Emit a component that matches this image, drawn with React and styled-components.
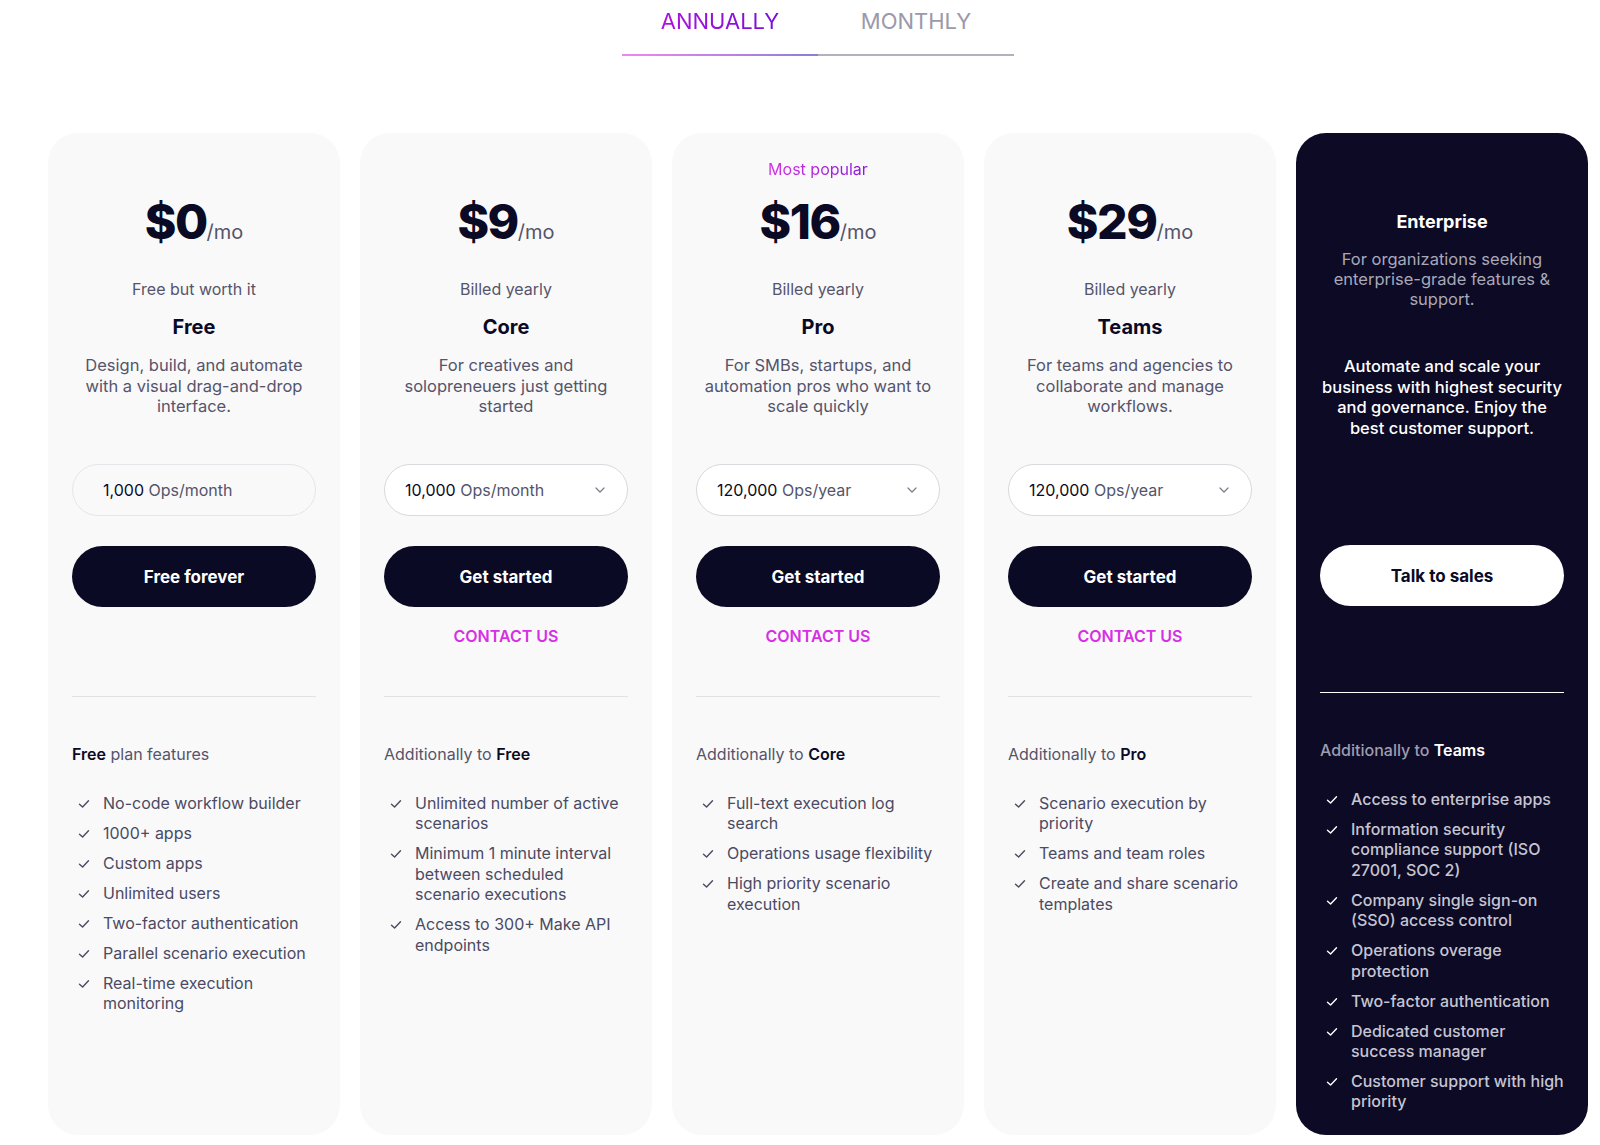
import React, { useState } from 'react'
import styled, { createGlobalStyle, css } from 'styled-components'

const GlobalStyle = createGlobalStyle`
  * { box-sizing: border-box; }
  body {
    margin: 0;
    background: #ffffff;
    font-family: 'Inter', 'Noto Sans', 'Liberation Sans', sans-serif;
    color: #0b0a24;
    -webkit-font-smoothing: antialiased;
  }
`

const plans = [
  {
    price: '$0',
    note: 'Free but worth it',
    name: 'Free',
    desc: 'Design, build, and automate with a visual drag-and-drop interface.',
    ops: '1,000',
    unit: 'Ops/month',
    select: false,
    cta: 'Free forever',
    contact: false,
    headingPre: '',
    headingBold: 'Free',
    headingPost: ' plan features',
    features: [
      'No-code workflow builder',
      '1000+ apps',
      'Custom apps',
      'Unlimited users',
      'Two-factor authentication',
      'Parallel scenario execution',
      'Real-time execution monitoring',
    ],
  },
  {
    price: '$9',
    note: 'Billed yearly',
    name: 'Core',
    desc: 'For creatives and solopreneuers just getting started',
    ops: '10,000',
    unit: 'Ops/month',
    select: true,
    cta: 'Get started',
    contact: true,
    headingPre: 'Additionally to ',
    headingBold: 'Free',
    features: [
      'Unlimited number of active scenarios',
      'Minimum 1 minute interval between scheduled scenario executions',
      'Access to 300+ Make API endpoints',
    ],
  },
  {
    popular: true,
    price: '$16',
    note: 'Billed yearly',
    name: 'Pro',
    desc: 'For SMBs, startups, and automation pros who want to scale quickly',
    ops: '120,000',
    unit: 'Ops/year',
    select: true,
    cta: 'Get started',
    contact: true,
    headingPre: 'Additionally to ',
    headingBold: 'Core',
    features: [
      'Full-text execution log search',
      'Operations usage flexibility',
      'High priority scenario execution',
    ],
  },
  {
    price: '$29',
    note: 'Billed yearly',
    name: 'Teams',
    desc: 'For teams and agencies to collaborate and manage workflows.',
    ops: '120,000',
    unit: 'Ops/year',
    select: true,
    cta: 'Get started',
    contact: true,
    headingPre: 'Additionally to ',
    headingBold: 'Pro',
    features: [
      'Scenario execution by priority',
      'Teams and team roles',
      'Create and share scenario templates',
    ],
  },
]

const enterpriseFeatures = [
  'Access to enterprise apps',
  'Information security compliance support (ISO 27001, SOC 2)',
  'Company single sign-on (SSO) access control',
  'Operations overage protection',
  'Two-factor authentication',
  'Dedicated customer success manager',
  'Customer support with high priority',
]

const CheckIcon = ({ color }) => (
  <svg width="12" height="10" viewBox="0 0 12 10" fill="none">
    <path d="M1.5 5.2 L4.6 8 L10.5 1.8" stroke={color} strokeWidth="1.4" strokeLinecap="round" strokeLinejoin="round" />
  </svg>
)

const Chevron = () => (
  <svg width="10" height="6" viewBox="0 0 10 6" fill="none">
    <path d="M1 1 L5 5 L9 1" stroke="#7c7b8c" strokeWidth="1.2" strokeLinecap="round" strokeLinejoin="round" />
  </svg>
)

function PlanCard({ plan }) {
  return (
    <Card>
      <Header>
        <Popular $show={plan.popular}>Most popular</Popular>
        <Price>
          {plan.price}
          <span>/mo</span>
        </Price>
        <Note>{plan.note}</Note>
        <PlanName>{plan.name}</PlanName>
        <Desc>{plan.desc}</Desc>
      </Header>
      <OpsPill $select={plan.select}>
        <span>
          <b>{plan.ops}</b> {plan.unit}
        </span>
        {plan.select && <Chevron />}
      </OpsPill>
      <CtaButton>{plan.cta}</CtaButton>
      <ContactArea>{plan.contact && <Contact>CONTACT US</Contact>}</ContactArea>
      <Divider />
      <FeatureHeading>
        {plan.headingPre}
        <b>{plan.headingBold}</b>
        {plan.headingPost}
      </FeatureHeading>
      <FeatureList>
        {plan.features.map((f) => (
          <Feature key={f}>
            <CheckIcon color="#4b4a63" />
            <span>{f}</span>
          </Feature>
        ))}
      </FeatureList>
    </Card>
  )
}

function EnterpriseCard() {
  return (
    <Card $dark>
      <EnterpriseHeader>
        <EnterpriseName>Enterprise</EnterpriseName>
        <EnterpriseDesc>For organizations seeking enterprise-grade features &amp; support.</EnterpriseDesc>
        <Tagline>
          Automate and scale your business with highest security and governance. Enjoy the best customer support.
        </Tagline>
      </EnterpriseHeader>
      <CtaButton $light>Talk to sales</CtaButton>
      <ContactArea $short />
      <Divider $dark />
      <FeatureHeading $dark>
        Additionally to <b>Teams</b>
      </FeatureHeading>
      <FeatureList>
        {enterpriseFeatures.map((f) => (
          <Feature key={f} $dark>
            <CheckIcon color="#ffffff" />
            <span>{f}</span>
          </Feature>
        ))}
      </FeatureList>
    </Card>
  )
}

export default function App() {
  const [period, setPeriod] = useState('annually')
  return (
    <>
      <GlobalStyle />
      <Page>
        <Tabs>
          <Tab onClick={() => setPeriod('annually')}>
            <TabLabel $active={period === 'annually'}>ANNUALLY</TabLabel>
            <TabBar $active={period === 'annually'} />
          </Tab>
          <Tab onClick={() => setPeriod('monthly')}>
            <TabLabel $active={period === 'monthly'}>MONTHLY</TabLabel>
            <TabBar $active={period === 'monthly'} />
          </Tab>
        </Tabs>
        <Grid>
          {plans.map((p) => (
            <PlanCard key={p.name} plan={p} />
          ))}
          <EnterpriseCard />
        </Grid>
      </Page>
    </>
  )
}

const Page = styled.div`
  width: 1540px;
  margin-left: 48px;
  display: flex;
  flex-direction: column;
  align-items: center;
`

const Tabs = styled.div`
  display: flex;
  width: 392px;
`

const Tab = styled.div`
  flex: 1;
  display: flex;
  flex-direction: column;
  align-items: stretch;
  padding-top: 6px;
  cursor: pointer;
`

const TabLabel = styled.div`
  align-self: center;
  font-size: 22px;
  line-height: 30px;
  font-weight: 400;
  margin-bottom: 18px;
  ${(p) =>
    p.$active
      ? css`
          background: linear-gradient(90deg, #b013dc, #7511d4);
          -webkit-background-clip: text;
          background-clip: text;
          color: transparent;
        `
      : css`
          color: #9b99aa;
        `}
`

const TabBar = styled.div`
  height: 2px;
  background: ${(p) =>
    p.$active ? 'linear-gradient(90deg, #f086f0, #8a7fd6)' : '#b3b1bd'};
`

const Grid = styled.div`
  margin-top: 77px;
  display: grid;
  grid-template-columns: repeat(5, 292px);
  gap: 20px;
  align-self: stretch;
`

const Card = styled.div`
  height: 1002px;
  border-radius: 30px;
  padding: 0 24px;
  display: flex;
  flex-direction: column;
  background: ${(p) => (p.$dark ? '#0c0a25' : '#f9f9fa')};
  color: ${(p) => (p.$dark ? '#ffffff' : '#0b0a24')};
`

const Header = styled.div`
  height: 331px;
  padding-top: 24px;
  display: flex;
  flex-direction: column;
  align-items: center;
  text-align: center;
`

const Popular = styled.div`
  height: 24px;
  font-size: 16px;
  line-height: 24px;
  visibility: ${(p) => (p.$show ? 'visible' : 'hidden')};
  background: linear-gradient(90deg, #d62ee6, #8a18d6);
  -webkit-background-clip: text;
  background-clip: text;
  color: transparent;
`

const Price = styled.div`
  margin-top: 12px;
  font-size: 48px;
  line-height: 58px;
  font-weight: 800;
  letter-spacing: -1.5px;
  color: #0b0a24;
  span {
    font-size: 20px;
    font-weight: 400;
    letter-spacing: 0;
    color: #55546b;
  }
`

const Note = styled.div`
  margin-top: 16px;
  font-size: 16px;
  line-height: 24px;
  color: #55546b;
`

const PlanName = styled.div`
  margin-top: 12px;
  font-size: 20px;
  line-height: 28px;
  font-weight: 700;
  color: #0b0a24;
`

const Desc = styled.p`
  margin: 14px 0 0;
  font-size: 16.5px;
  line-height: 20.5px;
  color: #55546b;
`

const OpsPill = styled.div`
  height: 52px;
  border-radius: 26px;
  border: 1px solid ${(p) => (p.$select ? '#dadade' : '#e6e6ea')};
  background: ${(p) => (p.$select ? '#ffffff' : 'transparent')};
  display: flex;
  align-items: center;
  justify-content: space-between;
  padding: 0 22px 0 20px;
  font-size: 16px;
  color: #55546b;
  b {
    font-weight: 400;
    color: #0b0a24;
  }
  ${(p) => !p.$select && css`padding-left: 30px;`}
`

const CtaButton = styled.button`
  margin-top: 30px;
  height: 61px;
  border-radius: 31px;
  border: none;
  width: 100%;
  font-family: 'Inter', 'Liberation Sans', sans-serif;
  font-size: 17px;
  font-weight: 700;
  cursor: pointer;
  background: ${(p) => (p.$light ? '#ffffff' : '#0b0a24')};
  color: ${(p) => (p.$light ? '#0b0a24' : '#ffffff')};
  ${(p) => p.$light && css`margin-top: 0;`}
`

const ContactArea = styled.div`
  height: ${(p) => (p.$short ? '86px' : '89px')};
  padding-top: 19px;
  display: flex;
  justify-content: center;
`

const Contact = styled.a`
  font-size: 16px;
  line-height: 20px;
  font-weight: 600;
  color: #d62fe4;
  cursor: pointer;
`

const Divider = styled.div`
  height: 1px;
  background: ${(p) => (p.$dark ? '#ffffff' : '#e2e2e6')};
`

const FeatureHeading = styled.div`
  margin-top: 45px;
  font-size: 16px;
  line-height: 24px;
  color: ${(p) => (p.$dark ? '#9e9dad' : '#55546b')};
  font-weight: ${(p) => (p.$dark ? 500 : 400)};
  b {
    font-weight: 600;
    color: ${(p) => (p.$dark ? '#ffffff' : '#0b0a24')};
  }
`

const FeatureList = styled.ul`
  list-style: none;
  margin: 27px 0 0;
  padding: 0 0 0 6px;
  display: flex;
  flex-direction: column;
  gap: 9.6px;
`

const Feature = styled.li`
  display: flex;
  gap: 13px;
  font-size: 16px;
  line-height: 20.4px;
  color: ${(p) => (p.$dark ? '#c6c5d1' : '#4b4a63')};
  font-weight: ${(p) => (p.$dark ? 500 : 400)};
  svg {
    flex-shrink: 0;
    margin-top: 6px;
  }
`

const EnterpriseHeader = styled.div`
  height: 412px;
  padding-top: 76px;
  display: flex;
  flex-direction: column;
  align-items: center;
  text-align: center;
`

const EnterpriseName = styled.div`
  font-size: 18px;
  line-height: 26px;
  font-weight: 700;
`

const EnterpriseDesc = styled.p`
  margin: 14px 0 0;
  font-size: 16.5px;
  line-height: 20px;
  color: #a9a8b8;
`

const Tagline = styled.p`
  margin: 47px 0 0;
  font-size: 16.5px;
  line-height: 20.5px;
  font-weight: 500;
  color: #ffffff;
`
